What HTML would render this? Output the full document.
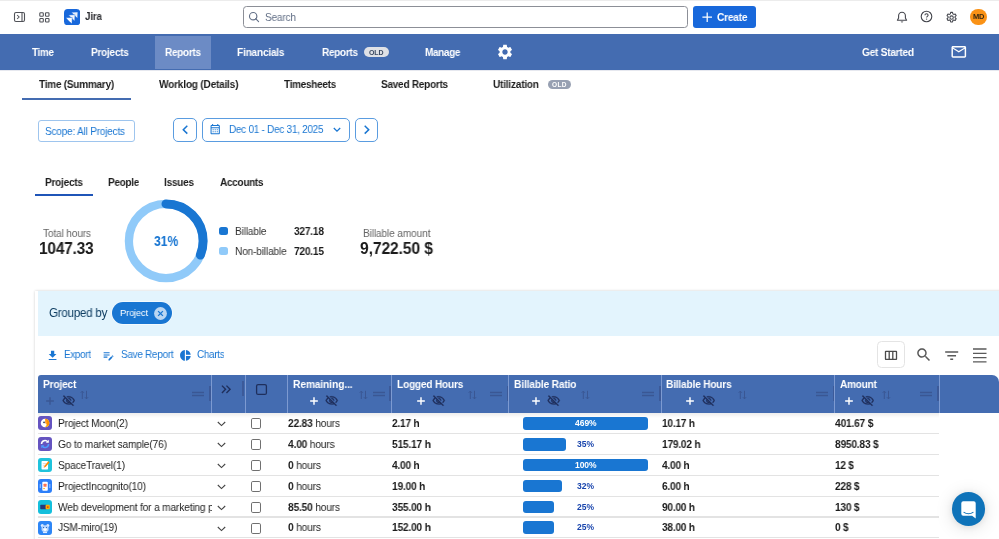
<!DOCTYPE html>
<html><head><meta charset="utf-8">
<style>
*{box-sizing:border-box;margin:0;padding:0}
html,body{width:999px;height:539px;overflow:hidden;background:#fff;font-family:"Liberation Sans",sans-serif;color:#172b4d}
.a{position:absolute;display:block}
.t{position:absolute;white-space:nowrap;will-change:transform}
</style></head><body>
<div class="a" style="left:0px;top:0px;width:999px;height:1px;background:#ececec"></div>
<svg class="a" style="left:13px;top:11px" width="13" height="12" viewBox="0 0 13 12"><rect x="1.5" y="1.5" width="10" height="9" rx="1.5" fill="none" stroke="#505258" stroke-width="1.1"/><line x1="9" y1="1.5" x2="9" y2="10.5" stroke="#505258" stroke-width="1.1"/><polyline points="4.1,4 6.1,6 4.1,8" fill="none" stroke="#505258" stroke-width="1.05"/></svg>
<svg class="a" style="left:39px;top:12px" width="11" height="11" viewBox="0 0 11 11"><g fill="none" stroke="#505258" stroke-width="1.1"><rect x="0.8" y="0.8" width="3.5" height="3.5" rx=".8"/><rect x="6.5" y="0.8" width="3.5" height="3.5" rx=".8"/><rect x="0.8" y="6.5" width="3.5" height="3.5" rx=".8"/><rect x="6.5" y="6.5" width="3.5" height="3.5" rx=".8"/></g></svg>
<svg class="a" style="left:64px;top:8.7px" width="16.3" height="16.3" viewBox="0 0 32 32"><rect width="32" height="32" rx="7.5" fill="#1868db"/><path d="M27.2 5.8L14.6 6.4L20.3 12.7L26.6 18.4z" fill="#fff" stroke="#1868db" stroke-width="0.9" opacity="0.9"/><path d="M21.6 11.2L9 11.8L14.7 18.1L21 23.8z" fill="#fff" stroke="#1868db" stroke-width="0.9" opacity="0.95"/><path d="M16.2 16.6L3.6 17.2L9.3 23.5L15.6 29.2z" fill="#fff" stroke="#1868db" stroke-width="0.9" opacity="1"/></svg>
<div class="a" style="left:243px;top:6px;width:445px;height:22px;border:1px solid #8c8f97;border-radius:3.5px;background:#fff"></div>
<svg class="a" style="left:248px;top:11px" width="12" height="12" viewBox="0 0 12 12"><circle cx="5.2" cy="5.2" r="3.7" fill="none" stroke="#626f86" stroke-width="1.1"/><line x1="7.9" y1="7.9" x2="10.6" y2="10.6" stroke="#626f86" stroke-width="1.1" stroke-linecap="round"/></svg>
<div class="a" style="left:693.3px;top:6px;width:62.8px;height:22px;background:#1868db;border-radius:3px"></div>
<svg class="a" style="left:702px;top:12px" width="10.4" height="10.4" viewBox="0 0 10.4 10.4"><path d="M5.2 0.4v9.6M0.4 5.2h9.6" stroke="#fff" stroke-width="1.25" fill="none"/></svg>
<svg class="a" style="left:896px;top:10.5px" width="12" height="13" viewBox="0 0 12 13"><path d="M6 1.3c-2 0-3.4 1.5-3.4 3.5v2.1L1.4 9.2h9.2L9.4 6.9V4.8c0-2-1.4-3.5-3.4-3.5z" fill="none" stroke="#44464d" stroke-width="1.1" stroke-linejoin="round"/><path d="M4.6 10.6c.3.7.8 1 1.4 1s1.1-.3 1.4-1z" fill="#44464d"/></svg>
<svg class="a" style="left:919.9px;top:10.1px" width="13" height="13" viewBox="0 0 13 13"><circle cx="6.5" cy="6.5" r="5.3" fill="none" stroke="#44464d" stroke-width="1.1"/><path d="M4.9 5.3c0-1 .7-1.6 1.6-1.6s1.6.6 1.6 1.5c0 1.1-1.5 1.2-1.5 2.3" fill="none" stroke="#44464d" stroke-width="1.05"/><circle cx="6.6" cy="9.1" r=".7" fill="#44464d"/></svg>
<svg class="a" style="left:945.3px;top:10.9px" width="13.2" height="13.2" viewBox="0 0 24 24"><path d="M10.3 2.5h3.4l.6 2.7 1.7 1 2.6-.9 1.7 3-2 1.9v2l2 1.9-1.7 3-2.6-.9-1.7 1-.6 2.7h-3.4l-.6-2.7-1.7-1-2.6.9-1.7-3 2-1.9v-2l-2-1.9 1.7-3 2.6.9 1.7-1z" fill="none" stroke="#44464d" stroke-width="1.9" stroke-linejoin="round"/><circle cx="12" cy="12" r="3.1" fill="none" stroke="#44464d" stroke-width="1.9"/></svg>
<div class="a" style="left:970px;top:8.7px;width:16.6px;height:16.6px;border-radius:50%;background:#fa9216"></div>
<div class="a" style="left:0px;top:34px;width:999px;height:36px;background:#446cb1"></div>
<div class="a" style="left:155px;top:35.5px;width:56px;height:33px;background:#6c8bc5"></div>
<div class="a" style="left:363.5px;top:47.1px;width:25.3px;height:10.2px;background:#dfe1e6;border-radius:5px"></div>
<svg class="a" style="left:496px;top:43.3px" width="18" height="18" viewBox="0 0 24 24" ><path d="M19.14 12.94c.04-.3.06-.61.06-.94 0-.32-.02-.64-.07-.94l2.03-1.58c.18-.14.23-.41.12-.61l-1.92-3.32c-.12-.22-.37-.29-.59-.22l-2.39.96c-.5-.38-1.03-.7-1.62-.94l-.36-2.54c-.04-.24-.24-.41-.48-.41h-3.84c-.24 0-.43.17-.47.41l-.36 2.54c-.59.24-1.13.57-1.62.94l-2.39-.96c-.22-.08-.47 0-.59.22L2.74 8.87c-.12.21-.08.47.12.61l2.03 1.58c-.05.3-.09.63-.09.94s.02.64.07.94l-2.03 1.58c-.18.14-.23.41-.12.61l1.92 3.32c.12.22.37.29.59.22l2.39-.96c.5.38 1.03.7 1.62.94l.36 2.54c.05.24.24.41.48.41h3.84c.24 0 .44-.17.47-.41l.36-2.54c.59-.24 1.13-.56 1.62-.94l2.39.96c.22.08.47 0 .59-.22l1.92-3.32c.12-.22.07-.47-.12-.61l-2.01-1.58zM12 15.6c-1.98 0-3.6-1.62-3.6-3.6s1.62-3.6 3.6-3.6 3.6 1.62 3.6 3.6-1.62 3.6-3.6 3.6z" fill="#fff"/></svg>
<svg class="a" style="left:950.2px;top:43.2px" width="17.6" height="17.6" viewBox="0 0 24 24" ><path d="M20 4H4c-1.1 0-1.99.9-1.99 2L2 18c0 1.1.9 2 2 2h16c1.1 0 2-.9 2-2V6c0-1.1-.9-2-2-2zm0 14H4V8l8 5 8-5v10zm-8-7L4 6h16l-8 5z" fill="#fff"/></svg>
<div class="a" style="left:0px;top:70px;width:999px;height:1px;background:#e6e8ef"></div>
<div class="a" style="left:548px;top:79.8px;width:23px;height:9.6px;background:#97a0b2;border-radius:5px"></div>
<div class="a" style="left:22px;top:97.6px;width:109px;height:2px;background:#446cb1"></div>
<div class="a" style="left:38px;top:120px;width:97.3px;height:22px;border:1px solid #9ec5ee;border-radius:3px;background:#fff"></div>
<div class="a" style="left:173px;top:117.6px;width:24.3px;height:24.2px;border:1px solid #5a9ce0;border-radius:5px;background:#fff"></div>
<div class="a" style="left:202.2px;top:117.6px;width:147.6px;height:24.2px;border:1px solid #5a9ce0;border-radius:5px;background:#fff"></div>
<div class="a" style="left:354.8px;top:117.6px;width:23.6px;height:24.2px;border:1px solid #5a9ce0;border-radius:5px;background:#fff"></div>
<svg class="a" style="left:180px;top:123px" width="10" height="14" viewBox="0 0 10 14"><polyline points="7.3,2.8 3.3,6.7 7.3,10.6" fill="none" stroke="#1976d2" stroke-width="1.5"/></svg>
<svg class="a" style="left:361px;top:123px" width="10" height="14" viewBox="0 0 10 14"><polyline points="3.7,2.8 7.7,6.7 3.7,10.6" fill="none" stroke="#1976d2" stroke-width="1.5"/></svg>
<svg class="a" style="left:332px;top:125px" width="10" height="9" viewBox="0 0 10 9"><polyline points="1.8,3 5,6.1 8.2,3" fill="none" stroke="#1976d2" stroke-width="1.3"/></svg>
<svg class="a" style="left:209.2px;top:123.1px" width="12.4" height="12.4" viewBox="0 0 24 24" ><path d="M19 4h-1V2h-2v2H8V2H6v2H5c-1.11 0-1.99.9-1.99 2L3 20c0 1.1.89 2 2 2h14c1.1 0 2-.9 2-2V6c0-1.1-.9-2-2-2zm0 16H5V10h14v10zm0-12H5V6h14v2zM9 14H7v-2h2v2zm4 0h-2v-2h2v2zm4 0h-2v-2h2v2zm-8 4H7v-2h2v2zm4 0h-2v-2h2v2zm4 0h-2v-2h2v2z" fill="#1976d2"/></svg>
<div class="a" style="left:34.5px;top:194.3px;width:58.2px;height:1.8px;background:#1f55b8"></div>
<svg class="a" style="left:120.3px;top:195.3px" width="92" height="92" viewBox="0 0 92 92"><circle cx="46" cy="46" r="37.1" fill="none" stroke="#90caf9" stroke-width="8.3"/><circle cx="46" cy="46" r="37.1" fill="none" stroke="#1976d2" stroke-width="9" stroke-linecap="round" stroke-dasharray="72.5 400" transform="rotate(-90 46 46)"/></svg>
<div class="a" style="left:219.4px;top:227.2px;width:8.2px;height:8.2px;background:#1976d2;border-radius:2.5px"></div>
<div class="a" style="left:219.4px;top:246.5px;width:8.2px;height:8.2px;background:#90caf9;border-radius:2.5px"></div>
<div class="a" style="left:34.5px;top:290.5px;width:970px;height:260px;background:#fff;box-shadow:0 0 2.5px rgba(0,0,0,.2)"></div>
<div class="a" style="left:38px;top:291px;width:961px;height:44.5px;background:#e3f4fd"></div>
<div class="a" style="left:111.6px;top:302.3px;width:60.4px;height:22.2px;background:#1976d2;border-radius:11.1px;box-shadow:0 0 0 0.7px rgba(255,255,255,.75)"></div>
<svg class="a" style="left:154.2px;top:307px" width="13" height="13" viewBox="0 0 13 13"><circle cx="6.5" cy="6.5" r="6.4" fill="#bbd6f2"/><path d="M4.1 4.1l4.8 4.8M8.9 4.1l-4.8 4.8" stroke="#1976d2" stroke-width="1.3"/></svg>
<svg class="a" style="left:45.6px;top:349.1px" width="13.2" height="13.2" viewBox="0 0 24 24" ><path d="M19 9h-4V3H9v6H5l7 7 7-7zM5 18v2h14v-2H5z" fill="#1976d2"/></svg>
<svg class="a" style="left:102.2px;top:349px" width="13" height="13" viewBox="0 0 24 24" ><path d="M3 10h11v2H3v-2zm0-2h11V6H3v2zm0 8h7v-2H3v2zm15.01-3.13.71-.71c.39-.39 1.02-.39 1.41 0l.71.71c.39.39.39 1.02 0 1.41l-.71.71-2.12-2.12zm-.71.71-5.3 5.3V21h2.12l5.3-5.3-2.12-2.12z" fill="#1976d2"/></svg>
<svg class="a" style="left:178.9px;top:348.6px" width="12.8" height="12.8" viewBox="0 0 24 24" ><path d="M11 2v20c-5.07-.5-9-4.79-9-10s3.93-9.5 9-10zm2.03 0v8.99H22c-.47-4.74-4.24-8.52-8.97-8.99zm0 11.01V22c4.74-.47 8.5-4.25 8.97-8.99h-8.97z" fill="#1976d2"/></svg>
<div class="a" style="left:877.2px;top:341.1px;width:27.6px;height:27.4px;border:1px solid #e4e4e4;border-radius:4.5px;background:#fff"></div>
<svg class="a" style="left:884px;top:350px" width="14" height="11" viewBox="0 0 14 11"><rect x="1.5" y="1.4" width="11" height="8" rx=".3" fill="none" stroke="#4a4a4a" stroke-width="1.3"/><path d="M5.2 1.4v8M8.8 1.4v8" stroke="#4a4a4a" stroke-width="1.3"/></svg>
<svg class="a" style="left:915.4px;top:346.4px" width="17.6" height="17.6" viewBox="0 0 24 24" ><path d="M15.5 14h-.79l-.28-.27C15.41 12.59 16 11.11 16 9.5 16 5.91 13.09 3 9.5 3S3 5.91 3 9.5 5.91 16 9.5 16c1.61 0 3.09-.59 4.23-1.57l.27.28v.79l5 4.99L20.49 19l-4.99-5zm-6 0C7.01 14 5 11.99 5 9.5S7.01 5 9.5 5 14 7.01 14 9.5 11.99 14 9.5 14z" fill="#5a5a5a"/></svg>
<svg class="a" style="left:943.3px;top:346.5px" width="17.4" height="17.4" viewBox="0 0 24 24" ><path d="M10 18h4v-2h-4v2zM3 6v2h18V6H3zm3 7h12v-2H6v2z" fill="#5a5a5a"/></svg>
<svg class="a" style="left:973px;top:347.6px" width="14" height="15" viewBox="0 0 14 15"><path d="M0 1h13.5M0 5.3h13.5M0 9.6h13.5M0 13.9h13.5" stroke="#5a5a5a" stroke-width="1.3"/></svg>
<div class="a" style="left:38px;top:374.5px;width:961px;height:38.2px;background:#446cb1;border-radius:3px 7px 0 0"></div>
<div class="a" style="left:210.7px;top:374.5px;width:1px;height:38.2px;background:#7d9ad1"></div>
<div class="a" style="left:245px;top:374.5px;width:1px;height:38.2px;background:#7d9ad1"></div>
<div class="a" style="left:286.7px;top:374.5px;width:1px;height:38.2px;background:#7d9ad1"></div>
<div class="a" style="left:390.8px;top:374.5px;width:1px;height:38.2px;background:#7d9ad1"></div>
<div class="a" style="left:508.3px;top:374.5px;width:1px;height:38.2px;background:#7d9ad1"></div>
<div class="a" style="left:661px;top:374.5px;width:1px;height:38.2px;background:#7d9ad1"></div>
<div class="a" style="left:834.4px;top:374.5px;width:1px;height:38.2px;background:#7d9ad1"></div>
<div class="a" style="left:938.7px;top:374.5px;width:1px;height:38.2px;background:#7d9ad1"></div>
<div class="a" style="left:209px;top:385.5px;width:1.7px;height:15.8px;background:#3c5a99"></div>
<div class="a" style="left:242.4px;top:380.5px;width:1.7px;height:15.9px;background:#3c5a99"></div>
<div class="a" style="left:389.2px;top:385.5px;width:1.7px;height:15.8px;background:#3c5a99"></div>
<div class="a" style="left:506.7px;top:385.5px;width:1.7px;height:15.8px;background:#3c5a99"></div>
<div class="a" style="left:659.4px;top:385.5px;width:1.7px;height:15.8px;background:#3c5a99"></div>
<div class="a" style="left:832.8px;top:385.5px;width:1.7px;height:15.8px;background:#3c5a99"></div>
<div class="a" style="left:937.1px;top:385.5px;width:1.7px;height:15.8px;background:#3c5a99"></div>
<svg class="a" style="left:46.2px;top:396.9px" width="8" height="8" viewBox="0 0 8 8"><path d="M4 0.15v7.7M0.15 4h7.7" stroke="#3a5794" stroke-width="1.45" fill="none"/></svg>
<svg class="a" style="left:61.6px;top:394.1px" width="13.4" height="13.4" viewBox="0 0 24 24" stroke="#1f2f5c" stroke-width="0.5"><path d="M12 6c3.79 0 7.17 2.13 8.82 5.5-.59 1.22-1.42 2.27-2.41 3.12l1.41 1.41c1.39-1.23 2.49-2.77 3.18-4.53C21.27 7.11 17 4 12 4c-1.27 0-2.49.2-3.64.57l1.65 1.65C10.66 6.09 11.32 6 12 6zm-1.07 1.14L13 9.21c.57.25 1.03.71 1.28 1.28l2.07 2.07c.08-.34.14-.7.14-1.07C16.5 9.01 14.48 7 12 7c-.37 0-.72.05-1.07.14zM2.01 3.87l2.68 2.68C3.06 7.83 1.77 9.53 1 11.5 2.73 15.89 7 19 12 19c1.52 0 2.98-.29 4.32-.82l3.42 3.42 1.41-1.41L3.42 2.45 2.01 3.87zm7.5 7.5l2.61 2.61c-.04.01-.08.02-.12.02-1.38 0-2.5-1.12-2.5-2.5 0-.05.01-.08.01-.13zm-3.4-3.4l1.75 1.75c-.23.55-.36 1.15-.36 1.78 0 2.48 2.02 4.5 4.5 4.5.63 0 1.23-.13 1.77-.36l.98.98c-.88.24-1.8.38-2.75.38-3.79 0-7.17-2.13-8.82-5.5.7-1.43 1.72-2.61 2.93-3.53z" fill="#1f2f5c"/></svg>
<svg class="a" style="left:80.4px;top:389.5px" width="9" height="10" viewBox="0 0 9 10"><g fill="none" stroke="#3a5794" stroke-width="1"><path d="M2.3 9V1.2M0.7 2.8L2.3 1.1L3.9 2.8"/><path d="M6.5 0.8V8.8M4.9 7.2L6.5 8.9L8.1 7.2"/></g></svg>
<svg class="a" style="left:189px;top:384.7px" width="18" height="18" viewBox="0 0 24 24" ><path d="M20 9H4v2h16V9zM4 15h16v-2H4v2z" fill="#3a5794"/></svg>
<svg class="a" style="left:309.8px;top:396.9px" width="8" height="8" viewBox="0 0 8 8"><path d="M4 0.15v7.7M0.15 4h7.7" stroke="#fff" stroke-width="1.45" fill="none"/></svg>
<svg class="a" style="left:325.2px;top:394.1px" width="13.4" height="13.4" viewBox="0 0 24 24" stroke="#1f2f5c" stroke-width="0.5"><path d="M12 6c3.79 0 7.17 2.13 8.82 5.5-.59 1.22-1.42 2.27-2.41 3.12l1.41 1.41c1.39-1.23 2.49-2.77 3.18-4.53C21.27 7.11 17 4 12 4c-1.27 0-2.49.2-3.64.57l1.65 1.65C10.66 6.09 11.32 6 12 6zm-1.07 1.14L13 9.21c.57.25 1.03.71 1.28 1.28l2.07 2.07c.08-.34.14-.7.14-1.07C16.5 9.01 14.48 7 12 7c-.37 0-.72.05-1.07.14zM2.01 3.87l2.68 2.68C3.06 7.83 1.77 9.53 1 11.5 2.73 15.89 7 19 12 19c1.52 0 2.98-.29 4.32-.82l3.42 3.42 1.41-1.41L3.42 2.45 2.01 3.87zm7.5 7.5l2.61 2.61c-.04.01-.08.02-.12.02-1.38 0-2.5-1.12-2.5-2.5 0-.05.01-.08.01-.13zm-3.4-3.4l1.75 1.75c-.23.55-.36 1.15-.36 1.78 0 2.48 2.02 4.5 4.5 4.5.63 0 1.23-.13 1.77-.36l.98.98c-.88.24-1.8.38-2.75.38-3.79 0-7.17-2.13-8.82-5.5.7-1.43 1.72-2.61 2.93-3.53z" fill="#1f2f5c"/></svg>
<svg class="a" style="left:358.5px;top:389.5px" width="9" height="10" viewBox="0 0 9 10"><g fill="none" stroke="#3a5794" stroke-width="1"><path d="M2.3 9V1.2M0.7 2.8L2.3 1.1L3.9 2.8"/><path d="M6.5 0.8V8.8M4.9 7.2L6.5 8.9L8.1 7.2"/></g></svg>
<svg class="a" style="left:369.6px;top:384.7px" width="18" height="18" viewBox="0 0 24 24" ><path d="M20 9H4v2h16V9zM4 15h16v-2H4v2z" fill="#3a5794"/></svg>
<svg class="a" style="left:417px;top:396.9px" width="8" height="8" viewBox="0 0 8 8"><path d="M4 0.15v7.7M0.15 4h7.7" stroke="#fff" stroke-width="1.45" fill="none"/></svg>
<svg class="a" style="left:432.2px;top:394.1px" width="13.4" height="13.4" viewBox="0 0 24 24" stroke="#1f2f5c" stroke-width="0.5"><path d="M12 6c3.79 0 7.17 2.13 8.82 5.5-.59 1.22-1.42 2.27-2.41 3.12l1.41 1.41c1.39-1.23 2.49-2.77 3.18-4.53C21.27 7.11 17 4 12 4c-1.27 0-2.49.2-3.64.57l1.65 1.65C10.66 6.09 11.32 6 12 6zm-1.07 1.14L13 9.21c.57.25 1.03.71 1.28 1.28l2.07 2.07c.08-.34.14-.7.14-1.07C16.5 9.01 14.48 7 12 7c-.37 0-.72.05-1.07.14zM2.01 3.87l2.68 2.68C3.06 7.83 1.77 9.53 1 11.5 2.73 15.89 7 19 12 19c1.52 0 2.98-.29 4.32-.82l3.42 3.42 1.41-1.41L3.42 2.45 2.01 3.87zm7.5 7.5l2.61 2.61c-.04.01-.08.02-.12.02-1.38 0-2.5-1.12-2.5-2.5 0-.05.01-.08.01-.13zm-3.4-3.4l1.75 1.75c-.23.55-.36 1.15-.36 1.78 0 2.48 2.02 4.5 4.5 4.5.63 0 1.23-.13 1.77-.36l.98.98c-.88.24-1.8.38-2.75.38-3.79 0-7.17-2.13-8.82-5.5.7-1.43 1.72-2.61 2.93-3.53z" fill="#1f2f5c"/></svg>
<svg class="a" style="left:467.6px;top:389.5px" width="9" height="10" viewBox="0 0 9 10"><g fill="none" stroke="#3a5794" stroke-width="1"><path d="M2.3 9V1.2M0.7 2.8L2.3 1.1L3.9 2.8"/><path d="M6.5 0.8V8.8M4.9 7.2L6.5 8.9L8.1 7.2"/></g></svg>
<svg class="a" style="left:486.6px;top:384.7px" width="18" height="18" viewBox="0 0 24 24" ><path d="M20 9H4v2h16V9zM4 15h16v-2H4v2z" fill="#3a5794"/></svg>
<svg class="a" style="left:531.9px;top:396.9px" width="8" height="8" viewBox="0 0 8 8"><path d="M4 0.15v7.7M0.15 4h7.7" stroke="#fff" stroke-width="1.45" fill="none"/></svg>
<svg class="a" style="left:547.3px;top:394.1px" width="13.4" height="13.4" viewBox="0 0 24 24" stroke="#1f2f5c" stroke-width="0.5"><path d="M12 6c3.79 0 7.17 2.13 8.82 5.5-.59 1.22-1.42 2.27-2.41 3.12l1.41 1.41c1.39-1.23 2.49-2.77 3.18-4.53C21.27 7.11 17 4 12 4c-1.27 0-2.49.2-3.64.57l1.65 1.65C10.66 6.09 11.32 6 12 6zm-1.07 1.14L13 9.21c.57.25 1.03.71 1.28 1.28l2.07 2.07c.08-.34.14-.7.14-1.07C16.5 9.01 14.48 7 12 7c-.37 0-.72.05-1.07.14zM2.01 3.87l2.68 2.68C3.06 7.83 1.77 9.53 1 11.5 2.73 15.89 7 19 12 19c1.52 0 2.98-.29 4.32-.82l3.42 3.42 1.41-1.41L3.42 2.45 2.01 3.87zm7.5 7.5l2.61 2.61c-.04.01-.08.02-.12.02-1.38 0-2.5-1.12-2.5-2.5 0-.05.01-.08.01-.13zm-3.4-3.4l1.75 1.75c-.23.55-.36 1.15-.36 1.78 0 2.48 2.02 4.5 4.5 4.5.63 0 1.23-.13 1.77-.36l.98.98c-.88.24-1.8.38-2.75.38-3.79 0-7.17-2.13-8.82-5.5.7-1.43 1.72-2.61 2.93-3.53z" fill="#1f2f5c"/></svg>
<svg class="a" style="left:581.4px;top:389.5px" width="9" height="10" viewBox="0 0 9 10"><g fill="none" stroke="#3a5794" stroke-width="1"><path d="M2.3 9V1.2M0.7 2.8L2.3 1.1L3.9 2.8"/><path d="M6.5 0.8V8.8M4.9 7.2L6.5 8.9L8.1 7.2"/></g></svg>
<svg class="a" style="left:639.3px;top:384.7px" width="18" height="18" viewBox="0 0 24 24" ><path d="M20 9H4v2h16V9zM4 15h16v-2H4v2z" fill="#3a5794"/></svg>
<svg class="a" style="left:686.1px;top:396.9px" width="8" height="8" viewBox="0 0 8 8"><path d="M4 0.15v7.7M0.15 4h7.7" stroke="#fff" stroke-width="1.45" fill="none"/></svg>
<svg class="a" style="left:701.7px;top:394.1px" width="13.4" height="13.4" viewBox="0 0 24 24" stroke="#1f2f5c" stroke-width="0.5"><path d="M12 6c3.79 0 7.17 2.13 8.82 5.5-.59 1.22-1.42 2.27-2.41 3.12l1.41 1.41c1.39-1.23 2.49-2.77 3.18-4.53C21.27 7.11 17 4 12 4c-1.27 0-2.49.2-3.64.57l1.65 1.65C10.66 6.09 11.32 6 12 6zm-1.07 1.14L13 9.21c.57.25 1.03.71 1.28 1.28l2.07 2.07c.08-.34.14-.7.14-1.07C16.5 9.01 14.48 7 12 7c-.37 0-.72.05-1.07.14zM2.01 3.87l2.68 2.68C3.06 7.83 1.77 9.53 1 11.5 2.73 15.89 7 19 12 19c1.52 0 2.98-.29 4.32-.82l3.42 3.42 1.41-1.41L3.42 2.45 2.01 3.87zm7.5 7.5l2.61 2.61c-.04.01-.08.02-.12.02-1.38 0-2.5-1.12-2.5-2.5 0-.05.01-.08.01-.13zm-3.4-3.4l1.75 1.75c-.23.55-.36 1.15-.36 1.78 0 2.48 2.02 4.5 4.5 4.5.63 0 1.23-.13 1.77-.36l.98.98c-.88.24-1.8.38-2.75.38-3.79 0-7.17-2.13-8.82-5.5.7-1.43 1.72-2.61 2.93-3.53z" fill="#1f2f5c"/></svg>
<svg class="a" style="left:737.6px;top:389.5px" width="9" height="10" viewBox="0 0 9 10"><g fill="none" stroke="#3a5794" stroke-width="1"><path d="M2.3 9V1.2M0.7 2.8L2.3 1.1L3.9 2.8"/><path d="M6.5 0.8V8.8M4.9 7.2L6.5 8.9L8.1 7.2"/></g></svg>
<svg class="a" style="left:813px;top:384.7px" width="18" height="18" viewBox="0 0 24 24" ><path d="M20 9H4v2h16V9zM4 15h16v-2H4v2z" fill="#3a5794"/></svg>
<svg class="a" style="left:845.3px;top:396.9px" width="8" height="8" viewBox="0 0 8 8"><path d="M4 0.15v7.7M0.15 4h7.7" stroke="#fff" stroke-width="1.45" fill="none"/></svg>
<svg class="a" style="left:860.7px;top:394.1px" width="13.4" height="13.4" viewBox="0 0 24 24" stroke="#1f2f5c" stroke-width="0.5"><path d="M12 6c3.79 0 7.17 2.13 8.82 5.5-.59 1.22-1.42 2.27-2.41 3.12l1.41 1.41c1.39-1.23 2.49-2.77 3.18-4.53C21.27 7.11 17 4 12 4c-1.27 0-2.49.2-3.64.57l1.65 1.65C10.66 6.09 11.32 6 12 6zm-1.07 1.14L13 9.21c.57.25 1.03.71 1.28 1.28l2.07 2.07c.08-.34.14-.7.14-1.07C16.5 9.01 14.48 7 12 7c-.37 0-.72.05-1.07.14zM2.01 3.87l2.68 2.68C3.06 7.83 1.77 9.53 1 11.5 2.73 15.89 7 19 12 19c1.52 0 2.98-.29 4.32-.82l3.42 3.42 1.41-1.41L3.42 2.45 2.01 3.87zm7.5 7.5l2.61 2.61c-.04.01-.08.02-.12.02-1.38 0-2.5-1.12-2.5-2.5 0-.05.01-.08.01-.13zm-3.4-3.4l1.75 1.75c-.23.55-.36 1.15-.36 1.78 0 2.48 2.02 4.5 4.5 4.5.63 0 1.23-.13 1.77-.36l.98.98c-.88.24-1.8.38-2.75.38-3.79 0-7.17-2.13-8.82-5.5.7-1.43 1.72-2.61 2.93-3.53z" fill="#1f2f5c"/></svg>
<svg class="a" style="left:881.9px;top:389.5px" width="9" height="10" viewBox="0 0 9 10"><g fill="none" stroke="#3a5794" stroke-width="1"><path d="M2.3 9V1.2M0.7 2.8L2.3 1.1L3.9 2.8"/><path d="M6.5 0.8V8.8M4.9 7.2L6.5 8.9L8.1 7.2"/></g></svg>
<svg class="a" style="left:917.2px;top:384.7px" width="18" height="18" viewBox="0 0 24 24" ><path d="M20 9H4v2h16V9zM4 15h16v-2H4v2z" fill="#3a5794"/></svg>
<svg class="a" style="left:218.15px;top:380.55px" width="16.5" height="16.5" viewBox="0 0 24 24" ><path d="M6.41 6 5 7.41 9.58 12 5 16.59 6.41 18l6-6z M13 6l-1.41 1.41L16.17 12l-4.58 4.59L13 18l6-6z" fill="#1f2f5c"/></svg>
<svg class="a" style="left:254.8px;top:382.5px" width="13" height="13" viewBox="0 0 13 13"><rect x="1.6" y="1.6" width="9.8" height="9.8" rx="1.5" fill="none" stroke="#1f2f5c" stroke-width="1.3"/></svg>
<div class="a" style="left:38px;top:412.7px;width:901px;height:5px;background:linear-gradient(rgba(0,0,0,.07),rgba(0,0,0,0))"></div>
<div class="a" style="left:38px;top:433.05px;width:901px;height:1.1px;background:#e3e3e3"></div>
<div class="a" style="left:38.1px;top:416.4px;width:14.1px;height:14.1px;background:#6554c0;border-radius:3px"></div>
<svg class="a" style="left:215.5px;top:420.3px" width="11" height="8" viewBox="0 0 11 8"><polyline points="1.8,2 5.5,5.6 9.2,2" fill="none" stroke="#444" stroke-width="1.1"/></svg>
<div class="a" style="left:250.6px;top:418.4px;width:10.9px;height:10.9px;border:1.2px solid #707070;border-radius:1.8px;background:#fff"></div>
<div class="a" style="left:523.1px;top:417.1px;width:124.6px;height:12.6px;background:#1976d2;border-radius:3px"></div>
<div class="a" style="left:38px;top:453.9px;width:901px;height:1.1px;background:#e3e3e3"></div>
<div class="a" style="left:38.1px;top:437.25px;width:14.1px;height:14.1px;background:#6554c0;border-radius:3px"></div>
<svg class="a" style="left:215.5px;top:441.15px" width="11" height="8" viewBox="0 0 11 8"><polyline points="1.8,2 5.5,5.6 9.2,2" fill="none" stroke="#444" stroke-width="1.1"/></svg>
<div class="a" style="left:250.6px;top:439.25px;width:10.9px;height:10.9px;border:1.2px solid #707070;border-radius:1.8px;background:#fff"></div>
<div class="a" style="left:523.1px;top:437.95px;width:43px;height:12.6px;background:#1976d2;border-radius:3px"></div>
<div class="a" style="left:38px;top:474.75px;width:901px;height:1.1px;background:#e3e3e3"></div>
<div class="a" style="left:38.1px;top:458.1px;width:14.1px;height:14.1px;background:#1fc3dc;border-radius:3px"></div>
<svg class="a" style="left:215.5px;top:462px" width="11" height="8" viewBox="0 0 11 8"><polyline points="1.8,2 5.5,5.6 9.2,2" fill="none" stroke="#444" stroke-width="1.1"/></svg>
<div class="a" style="left:250.6px;top:460.1px;width:10.9px;height:10.9px;border:1.2px solid #707070;border-radius:1.8px;background:#fff"></div>
<div class="a" style="left:523.1px;top:458.8px;width:124.6px;height:12.6px;background:#1976d2;border-radius:3px"></div>
<div class="a" style="left:38px;top:495.6px;width:901px;height:1.1px;background:#e3e3e3"></div>
<div class="a" style="left:38.1px;top:478.95px;width:14.1px;height:14.1px;background:#2d7ff9;border-radius:3px"></div>
<svg class="a" style="left:215.5px;top:482.85px" width="11" height="8" viewBox="0 0 11 8"><polyline points="1.8,2 5.5,5.6 9.2,2" fill="none" stroke="#444" stroke-width="1.1"/></svg>
<div class="a" style="left:250.6px;top:480.95px;width:10.9px;height:10.9px;border:1.2px solid #707070;border-radius:1.8px;background:#fff"></div>
<div class="a" style="left:523.1px;top:479.65px;width:39.3px;height:12.6px;background:#1976d2;border-radius:3px"></div>
<div class="a" style="left:38px;top:516.45px;width:901px;height:1.1px;background:#e3e3e3"></div>
<div class="a" style="left:38.1px;top:499.8px;width:14.1px;height:14.1px;background:#14bfdc;border-radius:3px"></div>
<svg class="a" style="left:215.5px;top:503.7px" width="11" height="8" viewBox="0 0 11 8"><polyline points="1.8,2 5.5,5.6 9.2,2" fill="none" stroke="#444" stroke-width="1.1"/></svg>
<div class="a" style="left:250.6px;top:501.8px;width:10.9px;height:10.9px;border:1.2px solid #707070;border-radius:1.8px;background:#fff"></div>
<div class="a" style="left:523.1px;top:500.5px;width:31.2px;height:12.6px;background:#1976d2;border-radius:3px"></div>
<div class="a" style="left:38px;top:537.3px;width:901px;height:1.1px;background:#e3e3e3"></div>
<div class="a" style="left:38.1px;top:520.65px;width:14.1px;height:14.1px;background:#2d86f6;border-radius:3px"></div>
<svg class="a" style="left:215.5px;top:524.55px" width="11" height="8" viewBox="0 0 11 8"><polyline points="1.8,2 5.5,5.6 9.2,2" fill="none" stroke="#444" stroke-width="1.1"/></svg>
<div class="a" style="left:250.6px;top:522.65px;width:10.9px;height:10.9px;border:1.2px solid #707070;border-radius:1.8px;background:#fff"></div>
<div class="a" style="left:523.1px;top:521.35px;width:31.2px;height:12.6px;background:#1976d2;border-radius:3px"></div>
<svg class="a" style="left:38.1px;top:416.4px" width="14.1" height="14.1" viewBox="0 0 28 28"><circle cx="14" cy="14" r="8.5" fill="#fff"/><path d="M14 5.5a8.5 8.5 0 0 1 0 17a11 11 0 0 0 0-17z" fill="#ffab00"/><path d="M14 5.5a8.5 8.5 0 0 1 6 14.5l-6-6z" fill="#ff8b00" opacity=".8"/><circle cx="12" cy="12.5" r="1.8" fill="#253858"/></svg>
<svg class="a" style="left:38.1px;top:437.25px" width="14.1" height="14.1" viewBox="0 0 28 28"><path d="M7 14a7 7 0 0 1 12.5-4.3" fill="none" stroke="#fff" stroke-width="3"/><path d="M21 14a7 7 0 0 1-12.5 4.3" fill="none" stroke="#4c9aff" stroke-width="3"/><path d="M21.5 5.5v6h-6z" fill="#fff"/><path d="M6.5 22.5v-6h6z" fill="#4c9aff"/></svg>
<svg class="a" style="left:38.1px;top:458.1px" width="14.1" height="14.1" viewBox="0 0 28 28"><rect x="7" y="6" width="13" height="17" rx="1.5" fill="#fff"/><path d="M9.5 11h8M9.5 14.5h6M9.5 18h4" stroke="#c1c7d0" stroke-width="1.3"/><path d="M20.5 6.5l2.5 2.5-8 9-3 1 .7-3.2z" fill="#ff8b00"/></svg>
<svg class="a" style="left:38.1px;top:478.95px" width="14.1" height="14.1" viewBox="0 0 28 28"><rect x="8.5" y="5.5" width="11" height="18" rx="2" fill="#fff"/><rect x="11" y="9.5" width="6" height="6" rx="1" fill="#ff7452"/><rect x="10.5" y="18" width="3" height="2" fill="#ffab00"/><path d="M4.5 10v8M23.5 10v8" stroke="#b3d4ff" stroke-width="1.8"/></svg>
<svg class="a" style="left:38.1px;top:499.8px" width="14.1" height="14.1" viewBox="0 0 28 28"><rect x="4.5" y="9.5" width="13" height="9" rx="1.5" fill="#253a7a"/><rect x="15" y="9.5" width="8.5" height="9" rx="2" fill="#ffab00"/><circle cx="19.5" cy="14" r="1.7" fill="#de350b"/></svg>
<svg class="a" style="left:38.1px;top:520.65px" width="14.1" height="14.1" viewBox="0 0 28 28"><circle cx="8.5" cy="9" r="3" fill="#deebff"/><circle cx="19.5" cy="9" r="3" fill="#deebff"/><rect x="7" y="8.5" width="14" height="13" rx="5" fill="#b3d4ff"/><ellipse cx="14" cy="17" rx="3.5" ry="2.7" fill="#fff"/><circle cx="11" cy="13" r="1" fill="#0747a6"/><circle cx="17" cy="13" r="1" fill="#0747a6"/><rect x="10" y="21" width="8" height="3" fill="#deebff"/></svg>
<div class="a" style="left:952px;top:492.3px;width:33.4px;height:33.4px;border-radius:50%;background:#0f73b9;box-shadow:0 1px 6px rgba(0,0,0,.08),0 2px 18px rgba(0,0,0,.13)"></div>
<svg class="a" style="left:960.6px;top:500.9px" width="16" height="18" viewBox="0 0 16 18"><path d="M2.3 0.3h10.4a2 2 0 0 1 2 2v15.2l-3.6-2.7H2.3a2 2 0 0 1-2-2V2.3a2 2 0 0 1 2-2z" fill="#fff"/><path d="M3 11.4c2.5 1.8 6.5 1.8 9 0" fill="none" stroke="#0f73b9" stroke-width="1.1" stroke-linecap="round"/></svg>
<div class="t" style="left:85.0px;top:11.64px;font-size:10px;line-height:10px;font-weight:bold;color:#292a2e;letter-spacing:-0.171px;transform-origin:0 0;transform:scaleX(0.9720);">Jira</div>
<div class="t" style="left:264.8px;top:11.71px;font-size:10.5px;line-height:10.5px;font-weight:normal;color:#626f86;letter-spacing:-0.236px;transform-origin:0 0;transform:scaleX(0.9657);">Search</div>
<div class="t" style="left:717.0px;top:11.51px;font-size:10.5px;line-height:10.5px;font-weight:bold;color:#fff;letter-spacing:-0.226px;transform-origin:0 0;transform:scaleX(0.9665);">Create</div>
<div class="t" style="left:972.6px;top:13.35px;font-size:7.5px;line-height:7.5px;font-weight:bold;color:#3a2a12;letter-spacing:-0.241px;transform-origin:0 0;transform:scaleX(0.9798);">MD</div>
<div class="t" style="left:32.0px;top:46.71px;font-size:10.5px;line-height:10.5px;font-weight:bold;color:#fff;letter-spacing:-0.408px;transform-origin:0 0;transform:scaleX(0.9522);">Time</div>
<div class="t" style="left:90.5px;top:46.71px;font-size:10.5px;line-height:10.5px;font-weight:bold;color:#fff;letter-spacing:-0.272px;transform-origin:0 0;transform:scaleX(0.9561);">Projects</div>
<div class="t" style="left:165.0px;top:46.71px;font-size:10.5px;line-height:10.5px;font-weight:bold;color:#fff;letter-spacing:-0.322px;transform-origin:0 0;transform:scaleX(0.9535);">Reports</div>
<div class="t" style="left:237.4px;top:46.71px;font-size:10.5px;line-height:10.5px;font-weight:bold;color:#fff;letter-spacing:-0.223px;transform-origin:0 0;transform:scaleX(0.9624);">Financials</div>
<div class="t" style="left:321.5px;top:46.71px;font-size:10.5px;line-height:10.5px;font-weight:bold;color:#fff;letter-spacing:-0.322px;transform-origin:0 0;transform:scaleX(0.9535);">Reports</div>
<div class="t" style="left:424.8px;top:46.71px;font-size:10.5px;line-height:10.5px;font-weight:bold;color:#fff;letter-spacing:-0.377px;transform-origin:0 0;transform:scaleX(0.9540);">Manage</div>
<div class="t" style="left:862.2px;top:46.71px;font-size:10.5px;line-height:10.5px;font-weight:bold;color:#fff;letter-spacing:-0.240px;transform-origin:0 0;transform:scaleX(0.9593);">Get Started</div>
<div class="t" style="left:369.0px;top:49.27px;font-size:7px;line-height:7px;font-weight:bold;color:#3b4a63;letter-spacing:-0.097px;transform-origin:0 0;transform:scaleX(0.9871);">OLD</div>
<div class="t" style="left:39.3px;top:79.11px;font-size:10.5px;line-height:10.5px;font-weight:bold;color:#1d1d1d;letter-spacing:-0.277px;transform-origin:0 0;transform:scaleX(0.9580);">Time (Summary)</div>
<div class="t" style="left:159.3px;top:79.11px;font-size:10.5px;line-height:10.5px;font-weight:bold;color:#1d1d1d;letter-spacing:-0.216px;transform-origin:0 0;transform:scaleX(0.9614);">Worklog (Details)</div>
<div class="t" style="left:283.7px;top:79.11px;font-size:10.5px;line-height:10.5px;font-weight:bold;color:#1d1d1d;letter-spacing:-0.314px;transform-origin:0 0;transform:scaleX(0.9532);">Timesheets</div>
<div class="t" style="left:381.3px;top:79.11px;font-size:10.5px;line-height:10.5px;font-weight:bold;color:#1d1d1d;letter-spacing:-0.276px;transform-origin:0 0;transform:scaleX(0.9569);">Saved Reports</div>
<div class="t" style="left:493.4px;top:79.11px;font-size:10.5px;line-height:10.5px;font-weight:bold;color:#1d1d1d;letter-spacing:-0.218px;transform-origin:0 0;transform:scaleX(0.9584);">Utilization</div>
<div class="t" style="left:552.3px;top:81.70px;font-size:6.5px;line-height:6.5px;font-weight:bold;color:#fff;letter-spacing:0.383px;transform-origin:0 0;transform:scaleX(1.0000);">OLD</div>
<div class="t" style="left:45.2px;top:125.51px;font-size:10.5px;line-height:10.5px;font-weight:normal;color:#1976d2;letter-spacing:-0.219px;transform-origin:0 0;transform:scaleX(0.9569);">Scope: All Projects</div>
<div class="t" style="left:228.5px;top:124.21px;font-size:10.5px;line-height:10.5px;font-weight:normal;color:#1976d2;letter-spacing:-0.278px;transform-origin:0 0;transform:scaleX(0.9497);">Dec 01 - Dec 31, 2025</div>
<div class="t" style="left:44.6px;top:176.71px;font-size:10.5px;line-height:10.5px;font-weight:bold;color:#1d1d1d;letter-spacing:-0.256px;transform-origin:0 0;transform:scaleX(0.9585);">Projects</div>
<div class="t" style="left:108.0px;top:176.71px;font-size:10.5px;line-height:10.5px;font-weight:bold;color:#1d1d1d;letter-spacing:-0.340px;transform-origin:0 0;transform:scaleX(0.9530);">People</div>
<div class="t" style="left:164.4px;top:176.71px;font-size:10.5px;line-height:10.5px;font-weight:bold;color:#1d1d1d;letter-spacing:-0.282px;transform-origin:0 0;transform:scaleX(0.9587);">Issues</div>
<div class="t" style="left:220.0px;top:176.71px;font-size:10.5px;line-height:10.5px;font-weight:bold;color:#1d1d1d;letter-spacing:-0.325px;transform-origin:0 0;transform:scaleX(0.9546);">Accounts</div>
<div class="t" style="left:42.8px;top:228.21px;font-size:10.5px;line-height:10.5px;font-weight:normal;color:#666;letter-spacing:-0.174px;transform-origin:0 0;transform:scaleX(0.9672);">Total hours</div>
<div class="t" style="left:39.2px;top:241.03px;font-size:15.8px;line-height:15.8px;font-weight:bold;color:#1b1b1b;letter-spacing:-0.205px;transform-origin:0 0;transform:scaleX(0.9789);">1047.33</div>
<div class="t" style="left:154.3px;top:233.63px;font-size:14.5px;line-height:14.5px;font-weight:bold;color:#1976d2;letter-spacing:0.000px;transform-origin:0 0;transform:scaleX(0.8336);">31%</div>
<div class="t" style="left:234.7px;top:226.41px;font-size:10.5px;line-height:10.5px;font-weight:normal;color:#333;letter-spacing:-0.175px;transform-origin:0 0;transform:scaleX(0.9652);">Billable</div>
<div class="t" style="left:234.7px;top:246.01px;font-size:10.5px;line-height:10.5px;font-weight:normal;color:#333;letter-spacing:-0.177px;transform-origin:0 0;transform:scaleX(0.9662);">Non-billable</div>
<div class="t" style="left:294.0px;top:226.41px;font-size:10.5px;line-height:10.5px;font-weight:bold;color:#1b1b1b;letter-spacing:-0.220px;transform-origin:0 0;transform:scaleX(0.9669);">327.18</div>
<div class="t" style="left:294.0px;top:246.01px;font-size:10.5px;line-height:10.5px;font-weight:bold;color:#1b1b1b;letter-spacing:-0.220px;transform-origin:0 0;transform:scaleX(0.9669);">720.15</div>
<div class="t" style="left:362.8px;top:228.21px;font-size:10.5px;line-height:10.5px;font-weight:normal;color:#666;letter-spacing:-0.158px;transform-origin:0 0;transform:scaleX(0.9701);">Billable amount</div>
<div class="t" style="left:359.8px;top:241.03px;font-size:15.8px;line-height:15.8px;font-weight:bold;color:#1b1b1b;letter-spacing:-0.094px;transform-origin:0 0;transform:scaleX(0.9888);">9,722.50 $</div>
<div class="t" style="left:49.4px;top:306.84px;font-size:12px;line-height:12px;font-weight:normal;color:#0d3c61;letter-spacing:-0.254px;transform-origin:0 0;transform:scaleX(0.9648);">Grouped by</div>
<div class="t" style="left:120.3px;top:308.25px;font-size:9.75px;line-height:9.75px;font-weight:normal;color:#fff;letter-spacing:-0.187px;transform-origin:0 0;transform:scaleX(0.9644);">Project</div>
<div class="t" style="left:64.1px;top:349.41px;font-size:10.5px;line-height:10.5px;font-weight:normal;color:#1976d2;letter-spacing:-0.356px;transform-origin:0 0;transform:scaleX(0.9447);">Export</div>
<div class="t" style="left:120.6px;top:349.41px;font-size:10.5px;line-height:10.5px;font-weight:normal;color:#1976d2;letter-spacing:-0.304px;transform-origin:0 0;transform:scaleX(0.9505);">Save Report</div>
<div class="t" style="left:197.2px;top:349.41px;font-size:10.5px;line-height:10.5px;font-weight:normal;color:#1976d2;letter-spacing:-0.353px;transform-origin:0 0;transform:scaleX(0.9461);">Charts</div>
<div class="t" style="left:42.6px;top:379.21px;font-size:10.5px;line-height:10.5px;font-weight:bold;color:#fff;letter-spacing:-0.190px;transform-origin:0 0;transform:scaleX(0.9690);">Project</div>
<div class="t" style="left:292.6px;top:379.21px;font-size:10.5px;line-height:10.5px;font-weight:bold;color:#fff;letter-spacing:-0.137px;transform-origin:0 0;transform:scaleX(0.9765);">Remaining...</div>
<div class="t" style="left:396.5px;top:379.21px;font-size:10.5px;line-height:10.5px;font-weight:bold;color:#fff;letter-spacing:-0.224px;transform-origin:0 0;transform:scaleX(0.9665);">Logged Hours</div>
<div class="t" style="left:513.5px;top:379.21px;font-size:10.5px;line-height:10.5px;font-weight:bold;color:#fff;letter-spacing:-0.159px;transform-origin:0 0;transform:scaleX(0.9698);">Billable Ratio</div>
<div class="t" style="left:666.4px;top:379.21px;font-size:10.5px;line-height:10.5px;font-weight:bold;color:#fff;letter-spacing:-0.196px;transform-origin:0 0;transform:scaleX(0.9652);">Billable Hours</div>
<div class="t" style="left:839.8px;top:379.21px;font-size:10.5px;line-height:10.5px;font-weight:bold;color:#fff;letter-spacing:-0.298px;transform-origin:0 0;transform:scaleX(0.9638);">Amount</div>
<div class="t" style="left:58.0px;top:418.11px;font-size:10.5px;line-height:10.5px;font-weight:normal;color:#1b1b1b;letter-spacing:-0.173px;transform-origin:0 0;transform:scaleX(0.9685);">Project Moon(2)</div>
<div class="t" style="left:288.1px;top:418.11px;font-size:10.5px;line-height:10.5px;font-weight:normal;color:#1b1b1b;letter-spacing:-0.179px;transform-origin:0 0;transform:scaleX(0.9687);"><b>22.83</b> hours</div>
<div class="t" style="left:392.0px;top:418.11px;font-size:10.5px;line-height:10.5px;font-weight:bold;color:#1b1b1b;letter-spacing:-0.226px;transform-origin:0 0;transform:scaleX(0.9634);">2.17 h</div>
<div class="t" style="left:574.7px;top:419.20px;font-size:8.5px;line-height:8.5px;font-weight:bold;color:#fff;letter-spacing:-0.025px;transform-origin:0 0;transform:scaleX(0.9966);">469%</div>
<div class="t" style="left:662.2px;top:418.11px;font-size:10.5px;line-height:10.5px;font-weight:bold;color:#1b1b1b;letter-spacing:-0.226px;transform-origin:0 0;transform:scaleX(0.9634);">10.17 h</div>
<div class="t" style="left:835.3px;top:418.11px;font-size:10.5px;line-height:10.5px;font-weight:bold;color:#1b1b1b;letter-spacing:-0.182px;transform-origin:0 0;transform:scaleX(0.9697);">401.67 $</div>
<div class="t" style="left:58.0px;top:438.96px;font-size:10.5px;line-height:10.5px;font-weight:normal;color:#1b1b1b;letter-spacing:-0.167px;transform-origin:0 0;transform:scaleX(0.9693);">Go to market sample(76)</div>
<div class="t" style="left:288.1px;top:438.96px;font-size:10.5px;line-height:10.5px;font-weight:normal;color:#1b1b1b;letter-spacing:-0.173px;transform-origin:0 0;transform:scaleX(0.9695);"><b>4.00</b> hours</div>
<div class="t" style="left:392.0px;top:438.96px;font-size:10.5px;line-height:10.5px;font-weight:bold;color:#1b1b1b;letter-spacing:-0.196px;transform-origin:0 0;transform:scaleX(0.9680);">515.17 h</div>
<div class="t" style="left:577.0px;top:440.05px;font-size:8.5px;line-height:8.5px;font-weight:bold;color:#1945ad;letter-spacing:-0.004px;transform-origin:0 0;transform:scaleX(0.9995);">35%</div>
<div class="t" style="left:662.2px;top:438.96px;font-size:10.5px;line-height:10.5px;font-weight:bold;color:#1b1b1b;letter-spacing:-0.211px;transform-origin:0 0;transform:scaleX(0.9656);">179.02 h</div>
<div class="t" style="left:835.3px;top:438.96px;font-size:10.5px;line-height:10.5px;font-weight:bold;color:#1b1b1b;letter-spacing:-0.195px;transform-origin:0 0;transform:scaleX(0.9677);">8950.83 $</div>
<div class="t" style="left:58.0px;top:459.81px;font-size:10.5px;line-height:10.5px;font-weight:normal;color:#1b1b1b;letter-spacing:-0.174px;transform-origin:0 0;transform:scaleX(0.9692);">SpaceTravel(1)</div>
<div class="t" style="left:288.1px;top:459.81px;font-size:10.5px;line-height:10.5px;font-weight:normal;color:#1b1b1b;letter-spacing:-0.174px;transform-origin:0 0;transform:scaleX(0.9710);"><b>0</b> hours</div>
<div class="t" style="left:392.0px;top:459.81px;font-size:10.5px;line-height:10.5px;font-weight:bold;color:#1b1b1b;letter-spacing:-0.226px;transform-origin:0 0;transform:scaleX(0.9634);">4.00 h</div>
<div class="t" style="left:574.8px;top:460.90px;font-size:8.5px;line-height:8.5px;font-weight:bold;color:#fff;letter-spacing:-0.059px;transform-origin:0 0;transform:scaleX(0.9920);">100%</div>
<div class="t" style="left:662.2px;top:459.81px;font-size:10.5px;line-height:10.5px;font-weight:bold;color:#1b1b1b;letter-spacing:-0.226px;transform-origin:0 0;transform:scaleX(0.9634);">4.00 h</div>
<div class="t" style="left:835.3px;top:459.81px;font-size:10.5px;line-height:10.5px;font-weight:bold;color:#1b1b1b;letter-spacing:-0.266px;transform-origin:0 0;transform:scaleX(0.9624);">12 $</div>
<div class="t" style="left:58.0px;top:480.66px;font-size:10.5px;line-height:10.5px;font-weight:normal;color:#1b1b1b;letter-spacing:-0.162px;transform-origin:0 0;transform:scaleX(0.9682);">ProjectIncognito(10)</div>
<div class="t" style="left:288.1px;top:480.66px;font-size:10.5px;line-height:10.5px;font-weight:normal;color:#1b1b1b;letter-spacing:-0.174px;transform-origin:0 0;transform:scaleX(0.9710);"><b>0</b> hours</div>
<div class="t" style="left:392.0px;top:480.66px;font-size:10.5px;line-height:10.5px;font-weight:bold;color:#1b1b1b;letter-spacing:-0.199px;transform-origin:0 0;transform:scaleX(0.9676);">19.00 h</div>
<div class="t" style="left:577.0px;top:481.75px;font-size:8.5px;line-height:8.5px;font-weight:bold;color:#1945ad;letter-spacing:-0.004px;transform-origin:0 0;transform:scaleX(0.9995);">32%</div>
<div class="t" style="left:662.2px;top:480.66px;font-size:10.5px;line-height:10.5px;font-weight:bold;color:#1b1b1b;letter-spacing:-0.226px;transform-origin:0 0;transform:scaleX(0.9634);">6.00 h</div>
<div class="t" style="left:835.3px;top:480.66px;font-size:10.5px;line-height:10.5px;font-weight:bold;color:#1b1b1b;letter-spacing:-0.217px;transform-origin:0 0;transform:scaleX(0.9680);">228 $</div>
<div class="t" style="left:58.0px;top:501.51px;font-size:10.5px;line-height:10.5px;font-weight:normal;color:#1b1b1b;letter-spacing:-0.169px;padding-bottom:4px;width:158.9px;overflow:hidden;transform-origin:0 0;transform:scaleX(0.9685);">Web development for a marketing p</div>
<div class="t" style="left:288.1px;top:501.51px;font-size:10.5px;line-height:10.5px;font-weight:normal;color:#1b1b1b;letter-spacing:-0.179px;transform-origin:0 0;transform:scaleX(0.9687);"><b>85.50</b> hours</div>
<div class="t" style="left:392.0px;top:501.51px;font-size:10.5px;line-height:10.5px;font-weight:bold;color:#1b1b1b;letter-spacing:-0.196px;transform-origin:0 0;transform:scaleX(0.9680);">355.00 h</div>
<div class="t" style="left:577.0px;top:502.60px;font-size:8.5px;line-height:8.5px;font-weight:bold;color:#1945ad;letter-spacing:-0.004px;transform-origin:0 0;transform:scaleX(0.9995);">25%</div>
<div class="t" style="left:662.2px;top:501.51px;font-size:10.5px;line-height:10.5px;font-weight:bold;color:#1b1b1b;letter-spacing:-0.226px;transform-origin:0 0;transform:scaleX(0.9634);">90.00 h</div>
<div class="t" style="left:835.3px;top:501.51px;font-size:10.5px;line-height:10.5px;font-weight:bold;color:#1b1b1b;letter-spacing:-0.217px;transform-origin:0 0;transform:scaleX(0.9680);">130 $</div>
<div class="t" style="left:58.0px;top:522.36px;font-size:10.5px;line-height:10.5px;font-weight:normal;color:#1b1b1b;letter-spacing:-0.197px;transform-origin:0 0;transform:scaleX(0.9670);">JSM-miro(19)</div>
<div class="t" style="left:288.1px;top:522.36px;font-size:10.5px;line-height:10.5px;font-weight:normal;color:#1b1b1b;letter-spacing:-0.174px;transform-origin:0 0;transform:scaleX(0.9710);"><b>0</b> hours</div>
<div class="t" style="left:392.0px;top:522.36px;font-size:10.5px;line-height:10.5px;font-weight:bold;color:#1b1b1b;letter-spacing:-0.196px;transform-origin:0 0;transform:scaleX(0.9680);">152.00 h</div>
<div class="t" style="left:577.0px;top:523.45px;font-size:8.5px;line-height:8.5px;font-weight:bold;color:#1945ad;letter-spacing:-0.004px;transform-origin:0 0;transform:scaleX(0.9995);">25%</div>
<div class="t" style="left:662.2px;top:522.36px;font-size:10.5px;line-height:10.5px;font-weight:bold;color:#1b1b1b;letter-spacing:-0.226px;transform-origin:0 0;transform:scaleX(0.9634);">38.00 h</div>
<div class="t" style="left:835.3px;top:522.36px;font-size:10.5px;line-height:10.5px;font-weight:bold;color:#1b1b1b;letter-spacing:-0.288px;transform-origin:0 0;transform:scaleX(0.9620);">0 $</div>
</body></html>
